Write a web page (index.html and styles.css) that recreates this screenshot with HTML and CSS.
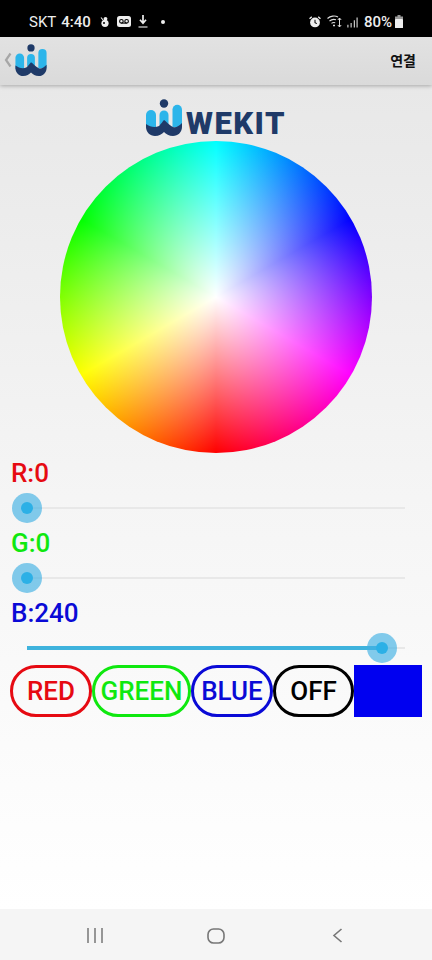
FILE: index.html
```html
<!DOCTYPE html>
<html lang="ko">
<head>
<meta charset="utf-8">
<title>WEKIT</title>
<link rel="stylesheet" href="styles.css">
</head>
<body>
<div class="phone">
  <header class="status">
    <div class="status-left">
      <span class="carrier">SKT</span><span class="time">4:40</span>
      <svg class="ic-a" viewBox="0 0 10 11"><circle cx="5" cy="7.300" r="3.600" fill="#eee"/><circle cx="5.500" cy="2.800" r="1.900" fill="#eee"/><path d="M1 1.500 3.500 4.500" stroke="#eee" stroke-width="1.100"/><circle cx="4" cy="7" r="1" fill="#000"/></svg>
      <svg class="ic-b" viewBox="0 0 14 11"><rect width="14" height="11" rx="2.500" fill="#eee"/><circle cx="4.400" cy="5.300" r="1.800" fill="none" stroke="#000" stroke-width="1.100"/><circle cx="9.600" cy="5.300" r="1.800" fill="none" stroke="#000" stroke-width="1.100"/><path d="M4.400 7.100h5.200" stroke="#000" stroke-width="1.100"/></svg>
      <svg class="ic-c" viewBox="0 0 10 13"><path d="M5 0v7.500M2 4.800l3 3.400 3-3.400" fill="none" stroke="#eee" stroke-width="1.700"/><path d="M.5 12h9" stroke="#eee" stroke-width="1.100"/></svg>
      <span class="dot"></span>
    </div>
    <div class="status-right">
      <svg class="ic-d" viewBox="0 0 13 13"><circle cx="6.500" cy="7" r="5.300" fill="#eee"/><path d="M6.500 4v3.300l2 1" fill="none" stroke="#000" stroke-width="1.100"/><path d="M.6 3 3 .8M12.400 3 10 .8" stroke="#eee" stroke-width="1.500"/></svg>
      <svg class="ic-e" viewBox="0 0 16 13"><path d="M.5 3.500C3.500.8 8 .4 11 2M2.500 6C4.500 4.400 7 4 9 4.800M4.500 8.400C5.500 7.600 7 7.400 8.200 7.800" fill="none" stroke="#ddd" stroke-width="1.100"/><path d="M6 10.500h2" stroke="#ddd" stroke-width="1.500"/><path d="M12.500 3v9M10.800 5l1.700-2 1.700 2M10.800 10l1.700 2 1.700-2" fill="none" stroke="#ddd" stroke-width="1"/></svg>
      <svg class="ic-f" viewBox="0 0 12 12"><path d="M1 9v3M4.500 7v5M8 4v8M11 1v11" stroke="#ddd" stroke-width="1.200"/></svg>
      <span class="battery-text">80%</span>
      <svg class="ic-g" viewBox="0 0 8 13"><rect x="2.500" width="3" height="2" fill="#999"/><rect y="1.500" width="8" height="3" fill="#999"/><rect y="4" width="8" height="9" rx=".6" fill="#eee"/></svg>
    </div>
  </header>

  <div class="appbar">
    <div class="appbar-left">
      <svg class="chevron" viewBox="0 0 8 16"><path d="M6.500 1.500 2 8l4.500 6.500" fill="none" stroke="#a6a6a6" stroke-width="2.200"/></svg>
      <svg class="logo-small" viewBox="0 0 36 37"><use href="#mark"/></svg>
    </div>
    <span class="connect">연결</span>
  </div>

  <main class="content">
    <div class="brand">
      <svg class="logo-large" viewBox="0 0 36 37">
        <g id="mark">
          <circle cx="18" cy="4.500" r="4.200" fill="#1f3a68"/>
          <path d="M0 16a4.800 4.800 0 0 1 10 0v13H0z" fill="#2cb5ea"/>
          <path d="M13.500 16a4.500 4.500 0 0 1 9 0v10h-9z" fill="#2cb5ea"/>
          <path d="M26.500 10.500a4.700 4.700 0 0 1 9.500 0V28h-9.500z" fill="#2cb5ea"/>
          <path d="M0 25C4 28 9 29 13 27 15 25 17 22 18 21 20 22 23 26 27 28 30 29 33 27 36 24V28C36 33 32 37 27 37 23 37 20 35 18 33 16 35 13 37 9 37 4 37 0 33 0 28Z" fill="#1f3a68"/>
        </g>
      </svg>
      <span class="brand-name">WEKIT</span>
    </div>

    <div class="wheel"></div>

    <section class="channels">
      <div class="channel">
        <div class="label label-r">R:0</div>
        <div class="slider">
          <div class="track"><div class="fill" style="width:0%"></div></div>
          <div class="thumb" style="left:0%"></div>
        </div>
      </div>
      <div class="channel">
        <div class="label label-g">G:0</div>
        <div class="slider">
          <div class="track"><div class="fill" style="width:0%"></div></div>
          <div class="thumb" style="left:0%"></div>
        </div>
      </div>
      <div class="channel">
        <div class="label label-b">B:240</div>
        <div class="slider">
          <div class="track"><div class="fill" style="width:94%"></div></div>
          <div class="thumb" style="left:94%"></div>
        </div>
      </div>
    </section>

    <div class="buttons">
      <button class="pill pill-red">RED</button>
      <button class="pill pill-green">GREEN</button>
      <button class="pill pill-blue">BLUE</button>
      <button class="pill pill-off">OFF</button>
      <div class="swatch"></div>
    </div>
  </main>

  <footer class="navbar">
    <svg class="nav-recent" viewBox="0 0 16 15"><path d="M1 0v15M8 0v15M15 0v15" stroke="#777" stroke-width="1.500"/></svg>
    <svg class="nav-home" viewBox="0 0 18 16"><rect x="1" y="1" width="16" height="14" rx="5.500" fill="none" stroke="#777" stroke-width="1.600"/></svg>
    <svg class="nav-back" viewBox="0 0 11 15"><path d="M9.500 1 2 7.500 9.500 14" fill="none" stroke="#777" stroke-width="1.600"/></svg>
  </footer>
</div>
</body>
</html>
```

FILE: styles.css
```css
* { box-sizing: border-box; }
html, body { margin: 0; padding: 0; }
body { font-family: Roboto, "Noto Sans CJK KR", sans-serif; }
.phone { width: 432px; height: 960px; display: flex; flex-direction: column; overflow: hidden; }

.status { height: 37px; flex: none; background: #000; color: #eee; display: flex; justify-content: space-between; align-items: center; padding: 6px 29px 0 29px; font-size: 15px; }
.status-left, .status-right { display: flex; align-items: center; }
.carrier { margin-right: 5px; }
.time { font-weight: 500; margin-right: 9px; }
.ic-a { width: 10px; height: 11px; margin-right: 7px; }
.ic-b { width: 14px; height: 11px; margin-right: 7px; }
.ic-c { width: 10px; height: 13px; margin-right: 13px; }
.dot { width: 4px; height: 4px; border-radius: 50%; background: #eee; }
.ic-d { width: 12px; height: 12px; margin-right: 6px; }
.ic-e { width: 16px; height: 13px; margin-right: 4px; }
.ic-f { width: 11px; height: 12px; margin-right: 6px; }
.battery-text { font-weight: 500; margin-right: 3px; }
.ic-g { width: 8px; height: 13px; }

.appbar { height: 48px; flex: none; background: linear-gradient(#e2e2e2, #dadada); box-shadow: 0 1px 4px rgba(0,0,0,.28); display: flex; justify-content: space-between; align-items: center; padding: 0 16px 2px 4px; position: relative; z-index: 1; }
.appbar-left { display: flex; align-items: center; gap: 3px; }
.chevron { width: 8px; height: 16px; }
.logo-small { width: 32px; height: 32px; }
.connect { font-family: "Noto Sans CJK KR", sans-serif; font-size: 14px; font-weight: 700; color: #111; }

.content { flex: 1; min-height: 0; background: linear-gradient(#e8e8e8, #f5f5f5 50%, #fff); display: flex; flex-direction: column; padding-top: 14px; }
.brand { height: 37px; display: flex; align-items: flex-end; justify-content: center; gap: 4px; }
.logo-large { width: 36px; height: 37px; }
.brand-name { font-size: 31px; line-height: 24px; font-weight: 900; color: #1f3a68; letter-spacing: 1.500px; }
.wheel { width: 312px; height: 312px; margin: 5px 0 0 60px; flex: none; border-radius: 50%;
  background:
    radial-gradient(closest-side, #fff, rgba(255,255,255,0)),
    conic-gradient(#0ff, #00f 60deg, #f0f 120deg, #f00 180deg, #ff0 240deg, #0f0 300deg, #0ff); }

.channels { display: flex; flex-direction: column; padding: 5px 27px 0 11px; }
.channel { height: 70px; display: flex; flex-direction: column; }
.label { height: 35px; font-size: 26px; line-height: 30px; font-weight: 500; }
.label-r { color: #e60a12; }
.label-g { color: #0fe80f; }
.label-b { color: #0a0ad6; }
.slider { position: relative; height: 30px; margin: 0 0 0 16px; display: flex; align-items: center; }
.track { width: 100%; height: 2px; background: #e8e8e8; display: flex; align-items: center; }
.fill { height: 4px; background: #3fb3dd; }
.thumb { position: absolute; top: 0; width: 30px; height: 30px; margin-left: -15px; border-radius: 50%; background: rgba(64,176,228,.65); display: flex; align-items: center; justify-content: center; }
.thumb::after { content: ""; width: 12px; height: 12px; border-radius: 50%; background: #2cb0e6; }

.buttons { display: flex; padding: 0 10px; margin-top: -3px; height: 52px; }
.pill { height: 52px; border: 3px solid; border-radius: 26px; background: transparent; font-family: Roboto, sans-serif; font-size: 26px; font-weight: 500; padding: 0; flex: none; }
.pill-red { width: 82px; color: #e60a12; border-color: #e60a12; }
.pill-green { width: 99px; color: #0fe80f; border-color: #0fe80f; }
.pill-blue { width: 82px; color: #0a0ad6; border-color: #0a0ad6; }
.pill-off { width: 81px; color: #000; border-color: #000; }
.swatch { width: 68px; height: 52px; background: #0000f0; }

.navbar { height: 51px; flex: none; background: #f5f5f5; display: flex; align-items: center; padding: 2px 0 0 87px; }
.nav-recent { width: 16px; height: 15px; margin-right: 104px; }
.nav-home { width: 18px; height: 16px; margin-right: 107px; }
.nav-back { width: 11px; height: 15px; }
```
